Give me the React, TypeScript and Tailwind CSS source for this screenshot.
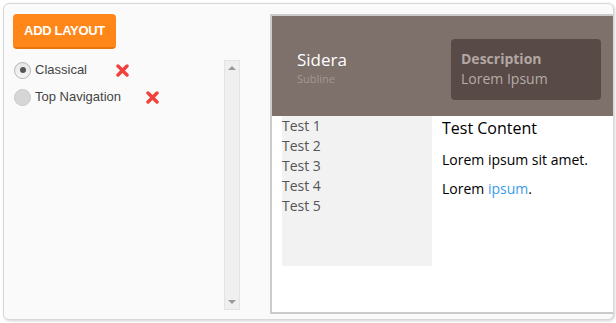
import React from "react";

const layouts = [
  { id: 1, label: "Classical", checked: true, gap: "ml-[29px]" },
  { id: 2, label: "Top Navigation", checked: false, gap: "ml-[25px]" },
];

const RemoveIcon = () => (
  <svg width="13" height="13" viewBox="0 0 13 13">
    <path d="M2 2 L11 11 M11 2 L2 11" stroke="#f2403b" strokeWidth="3.4" strokeLinecap="round" />
  </svg>
);

const Radio = ({ checked }: { checked: boolean }) =>
  checked ? (
    <span className="flex items-center justify-center w-[17px] h-[17px] rounded-full border border-[#b5b5b5] bg-gradient-to-b from-[#e6e6e6] to-[#f6f6f6]">
      <span className="w-[6px] h-[6px] rounded-full bg-[#555]" />
    </span>
  ) : (
    <span className="w-[17px] h-[17px] rounded-full border border-[#c9c9c9] bg-[#d6d6d6]" />
  );

export default function App() {
  return (
    <div className="w-[616px] h-[323px] bg-white pt-[3px] pl-[3px]">
      <div className="flex w-[611px] h-[317px] rounded-[6px] border border-[#d8d8d8] bg-[#fafafa] shadow-[1px_1px_3px_rgba(0,0,0,0.18)] overflow-hidden">
        <div className="w-[266px] pl-[9px] pt-[10px] font-['Liberation_Sans',Arial,sans-serif]">
          <button className="w-[103px] h-[35px] rounded-[4px] bg-[#ff8618] border-b-2 border-[#e8750c] text-white text-[13px] font-bold tracking-tight">
            ADD LAYOUT
          </button>
          <div className="flex mt-[11px] h-[250px]">
            <div className="flex-1 pl-[1px] pt-[1px]">
              {layouts.map((item) => (
                <div key={item.id} className="flex items-center h-[18px] mb-[9px]">
                  <Radio checked={item.checked} />
                  <span className="ml-[4px] text-[13px] text-[#444]">{item.label}</span>
                  <span className={item.gap}>
                    <RemoveIcon />
                  </span>
                </div>
              ))}
            </div>
            <div className="w-[16px] mr-[30px] flex flex-col items-center justify-between py-[5px] bg-[#efefef] border border-[#e3e3e3]">
              <span className="w-0 h-0 border-x-[4px] border-x-transparent border-b-[4px] border-b-[#999]" />
              <span className="w-0 h-0 border-x-[4px] border-x-transparent border-t-[4px] border-t-[#999]" />
            </div>
          </div>
        </div>

        <div className="mt-[10px] w-[343px] h-[300px] border-2 border-r-0 border-[#cbcbcb] bg-white font-['Open_Sans',sans-serif]">
          <div className="flex items-center justify-between h-[100px] bg-[#7e706b] pl-[25px] pr-[12px]">
            <div className="mt-[3px]">
              <div className="text-[17px] leading-[22px] text-white">Sidera</div>
              <div className="text-[11px] leading-[16px] text-[#a39793]">Subline</div>
            </div>
            <div className="w-[150px] h-[61px] mt-[6px] rounded-[4px] bg-[#584a46] px-[10px] pt-[10px]">
              <div className="text-[14px] leading-[20px] font-bold text-[#b2a7a3]">Description</div>
              <div className="text-[14px] leading-[20px] text-[#b6aca8]">Lorem Ipsum</div>
            </div>
          </div>
          <div className="flex px-[10px]">
            <div className="w-[150px] h-[150px] bg-[#f2f2f2] text-[14px] leading-[20px] text-[#555]">
              <div>Test 1</div>
              <div>Test 2</div>
              <div>Test 3</div>
              <div>Test 4</div>
              <div>Test 5</div>
            </div>
            <div className="ml-[10px] text-black">
              <div className="text-[16px] leading-[24px]">Test Content</div>
              <p className="mt-[10px] text-[14px] leading-[20px]">Lorem ipsum sit amet.</p>
              <p className="mt-[9px] text-[14px] leading-[20px]">
                Lorem <span className="text-[#3a9be8]">ipsum</span>.
              </p>
            </div>
          </div>
        </div>
      </div>
    </div>
  );
}
